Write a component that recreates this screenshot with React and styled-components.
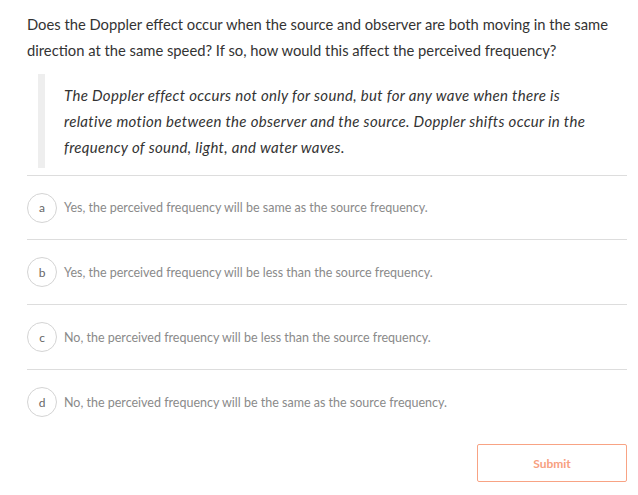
import React from 'react'
import styled, {createGlobalStyle} from 'styled-components'

const GlobalStyle = createGlobalStyle`
  html, body {
    margin: 0;
    padding: 0;
    background: #fff;
  }
  body {
    font-family: Lato, "Open Sans", sans-serif;
    color: #333;
  }
`

const options = [
    {key: 'a', text: 'Yes, the perceived frequency will be same as the source frequency.'},
    {key: 'b', text: 'Yes, the perceived frequency will be less than the source frequency.'},
    {key: 'c', text: 'No, the perceived frequency will be less than the source frequency.'},
    {key: 'd', text: 'No, the perceived frequency will be the same as the source frequency.'}
]

const App = () => {
    return (
        <Wrapper>
            <GlobalStyle/>
            <Question>
                Does the Doppler effect occur when the source and observer are both moving in the same
                direction at the same speed? If so, how would this affect the perceived frequency?
            </Question>
            <Quote>
                The Doppler effect occurs not only for sound, but for any wave when there is
                relative motion between the observer and the source. Doppler shifts occur in the
                frequency of sound, light, and water waves.
            </Quote>
            <Options>
                {options.map((option) => {
                    return (
                        <Option key={option.key}>
                            <Letter>{option.key}</Letter>
                            <OptionText>{option.text}</OptionText>
                        </Option>
                    )
                })}
            </Options>
            <Footer>
                <SubmitButton type='button'>Submit</SubmitButton>
            </Footer>
        </Wrapper>
    )
}

const Wrapper = styled.div`
  width: 600px;
  padding: 11px 0 0 27px;
`

const Question = styled.p`
  margin: 0;
  font-size: 14.75px;
  line-height: 26px;
  color: #333;
`

const Quote = styled.blockquote`
  margin: 11px 0 0 11px;
  padding: 8px 20px 8px 19px;
  border-left: 7px solid #eeeeee;
  font-style: italic;
  font-size: 15px;
  letter-spacing: 0.32px;
  line-height: 26px;
  color: #333;
`

const Options = styled.div`
  margin-top: 7px;
  border-top: 1px solid #dddddd;
`

const Option = styled.div`
  display: flex;
  align-items: center;
  gap: 7px;
  height: 64px;
  border-bottom: 1px solid #dddddd;
  &:first-child {
    height: 63px;
  }
  &:last-child {
    border-bottom: none;
  }
`

const Letter = styled.span`
  box-sizing: border-box;
  display: flex;
  align-items: center;
  justify-content: center;
  width: 30px;
  height: 30px;
  border: 1px solid #d4d4d4;
  border-radius: 50%;
  font-size: 12px;
  color: #666;
  flex-shrink: 0;
`

const OptionText = styled.span`
  font-size: 12.5px;
  color: #8a8a8a;
`

const Footer = styled.div`
  display: flex;
  justify-content: flex-end;
  margin-top: 10px;
`

const SubmitButton = styled.button`
  width: 150px;
  height: 38px;
  background: #fff;
  border: 1px solid #f8a384;
  border-radius: 2px;
  color: #f7a07f;
  font-family: Lato, sans-serif;
  font-weight: 700;
  font-size: 12px;
  cursor: pointer;
`

export default App
